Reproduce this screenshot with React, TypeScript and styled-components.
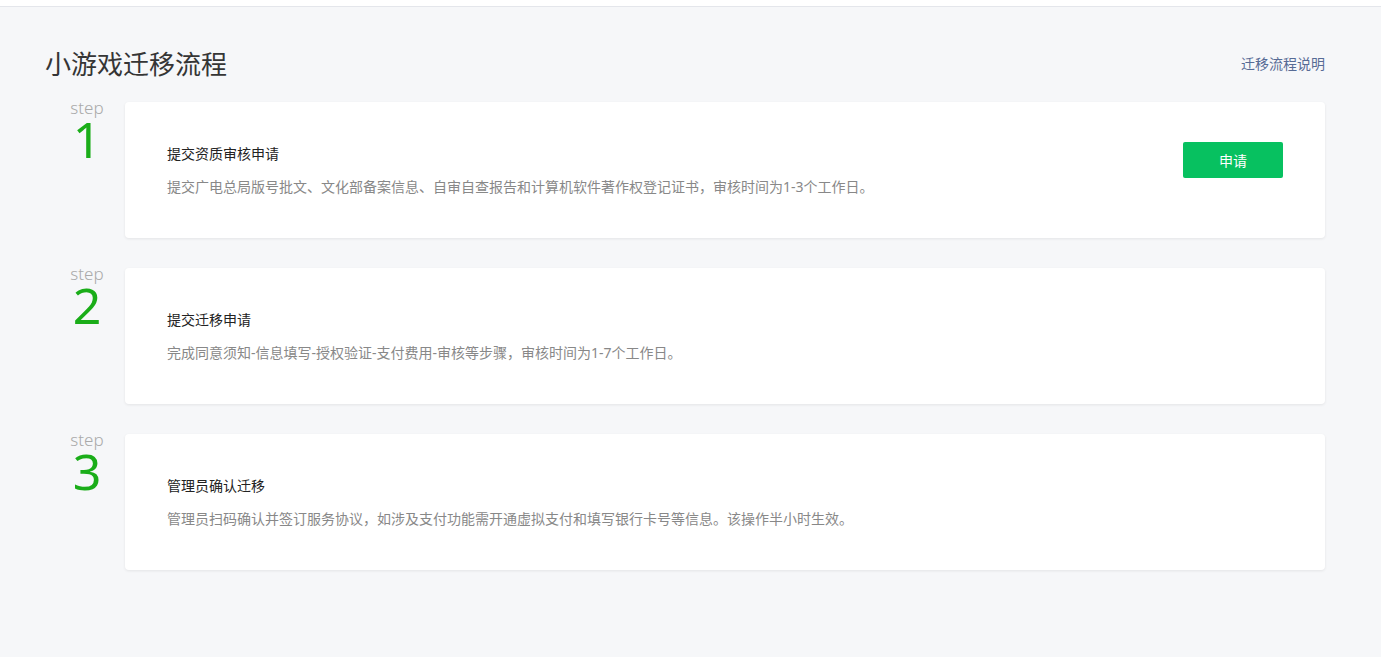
import styled, { createGlobalStyle } from "styled-components";

const GlobalStyle = createGlobalStyle`
    html, body {
        margin: 0;
        padding: 0;
        background: #f6f7f9;
        font-family: "Noto Sans", "Noto Sans CJK SC", sans-serif;
    }
`;

const TopBar = styled.div`
    height: 6px;
    background: #fff;
    border-bottom: 1px solid #e4e6eb;
`;

const Main = styled.main`
    padding: 32px 56px 60px 45px;
`;

const Header = styled.header`
    display: flex;
    justify-content: space-between;
    align-items: center;
    height: 48px;
    margin-bottom: 15px;
`;

const Title = styled.h1`
    margin: 0;
    font-size: 26px;
    font-weight: 400;
    color: #353535;
`;

const HelpLink = styled.a`
    font-size: 14px;
    color: #576b95;
    text-decoration: none;
    cursor: pointer;
`;

const StepList = styled.ol`
    list-style: none;
    margin: 0;
    padding: 0;
    display: flex;
    flex-direction: column;
    gap: 30px;
`;

const StepRow = styled.li`
    display: flex;
`;

const StepMark = styled.div`
    width: 80px;
    padding-left: 4px;
    box-sizing: border-box;
    display: flex;
    flex-direction: column;
    align-items: center;
    flex-shrink: 0;
`;

const StepWord = styled.span`
    font-size: 17px;
    line-height: 18px;
    margin-top: -3px;
    color: #aaaaaa;
    font-weight: 300;
`;

const StepNum = styled.span`
    font-size: 50px;
    line-height: 44px;
    color: #1aad19;
`;

const Card = styled.div`
    flex: 1;
    height: 136px;
    box-sizing: border-box;
    background: #fff;
    border-radius: 4px;
    box-shadow: 0 1px 3px rgba(0, 0, 0, 0.08);
    padding: 0 42px;
    display: flex;
    align-items: center;
    justify-content: space-between;
`;

const Info = styled.div`
    display: flex;
    flex-direction: column;
    gap: 13px;
`;

const CardTitle = styled.h3`
    margin: 0;
    font-size: 14px;
    line-height: 20px;
    font-weight: 400;
    color: #222;
`;

const CardDesc = styled.p`
    margin: 0;
    font-size: 14px;
    line-height: 20px;
    color: #888;
`;

const ApplyButton = styled.button`
    width: 100px;
    height: 36px;
    margin-top: -20px;
    border: none;
    border-radius: 2px;
    background: #07c160;
    color: #fff;
    font-family: inherit;
    font-size: 14px;
    cursor: pointer;
`;

const steps = [
    {
        title: "提交资质审核申请",
        desc: "提交广电总局版号批文、文化部备案信息、自审自查报告和计算机软件著作权登记证书，审核时间为1-3个工作日。",
        action: "申请",
    },
    {
        title: "提交迁移申请",
        desc: "完成同意须知-信息填写-授权验证-支付费用-审核等步骤，审核时间为1-7个工作日。",
    },
    {
        title: "管理员确认迁移",
        desc: "管理员扫码确认并签订服务协议，如涉及支付功能需开通虚拟支付和填写银行卡号等信息。该操作半小时生效。",
    },
];

export default function App() {
    return (
        <>
            <GlobalStyle />
            <TopBar />
            <Main>
                <Header>
                    <Title>小游戏迁移流程</Title>
                    <HelpLink>迁移流程说明</HelpLink>
                </Header>
                <StepList>
                    {steps.map((s, i) => (
                        <StepRow key={s.title}>
                            <StepMark>
                                <StepWord>step</StepWord>
                                <StepNum>{i + 1}</StepNum>
                            </StepMark>
                            <Card>
                                <Info>
                                    <CardTitle>{s.title}</CardTitle>
                                    <CardDesc>{s.desc}</CardDesc>
                                </Info>
                                {s.action && <ApplyButton>{s.action}</ApplyButton>}
                            </Card>
                        </StepRow>
                    ))}
                </StepList>
            </Main>
        </>
    );
}
